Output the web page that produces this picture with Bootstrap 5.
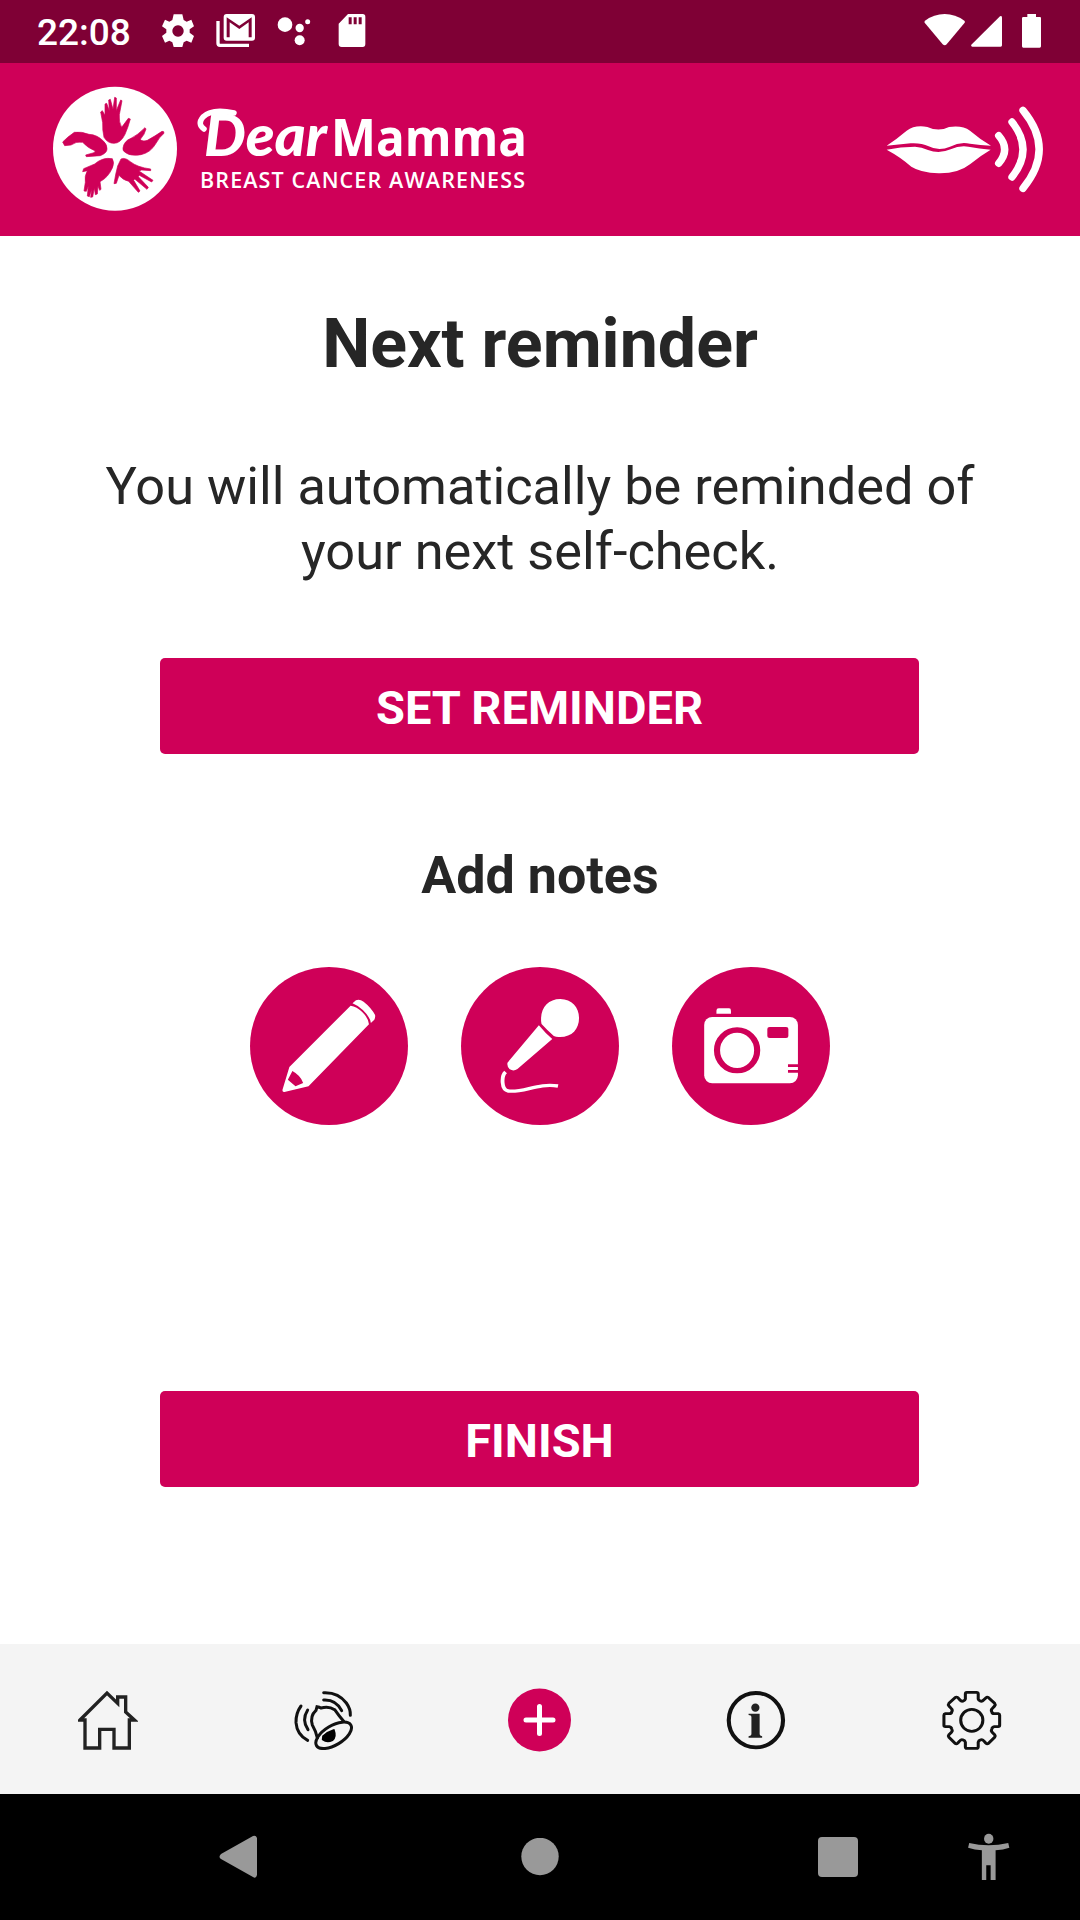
<!DOCTYPE html>
<html lang="en">
<head>
<meta charset="utf-8">
<meta name="viewport" content="width=device-width, initial-scale=1">
<title>Dear Mamma – Next reminder</title>
<link href="https://cdn.jsdelivr.net/npm/bootstrap@5.3.0/dist/css/bootstrap.min.css" rel="stylesheet">
<style>
  :root { --pink: #cf0058; --wine: #7f0035; --ink: #262626; }
  body { font-family: Roboto, "Liberation Sans", sans-serif; color: var(--ink); background: #fff; }
  svg { display: block; flex: none; }
  .screen { width: 1080px; height: 1920px; overflow: hidden; }
  .statusbar { height: 63px; background: var(--wine); color: #fff; padding: 0 38px 2px 37px; }
  .clock { font-size: 37px; font-weight: 500; line-height: 1; width: 123px; padding-top: 4px; }
  .ic-mail { margin-left: 19px; }
  .ic-dots { margin-left: 20px; }
  .ic-card { margin-left: 24px; }
  .ic-signal { margin-left: 4px; }
  .ic-battery { margin-left: 18px; }
  .appbar { height: 173px; background: var(--pink); padding: 0 36px 2px 53px; }
  .wordmark { margin-left: 20px; overflow: visible; }
  .heading { font-size: 68.1px; line-height: 80px; margin: 68px 0 0; font-weight: 700; }
  .message { font-size: 52.3px; line-height: 65px; margin: 70px 0 0; }
  .btn-pink { width: 759px; height: 96px; margin-right: 1px; background: var(--pink); color: #fff; border: 0; border-radius: 5px;
              font-size: 47px; font-weight: 700; line-height: 1; padding: 3px 0 0; }
  .btn-pink:hover { background: var(--wine); color: #fff; }
  .btn-set { margin-top: 74px; }
  .subheading { font-size: 52px; line-height: 62px; font-weight: 700; margin: 91px 0 0; }
  .notes { gap: 53px; margin-top: 60px; }
  .note { width: 158px; height: 158px; background: var(--pink); border: 0; }
  .btn-finish { margin-top: 266px; }
  .tabs { height: 150px; background: #f4f4f4; padding-top: 2px; }
  .sysnav { height: 126px; background: #000; padding-left: 217px; }
  .sysnav svg { fill: #999; }
  .nav-home { margin-left: 262px; }
  .nav-recent { margin-left: 259px; }
  .nav-access { margin-left: 109px; }
</style>
</head>
<body>
<div class="screen d-flex flex-column">

  <div class="statusbar d-flex align-items-center">
    <span class="clock">22:08</span>
    <svg width="36" height="36" viewBox="480 42 108 108" fill="#fff" fill-rule="evenodd"><path d="M521 46h26l4 17 9 5 14-6 8 20-13 9v10l13 10-8 20-14-6-9 5-4 14h-26l-4-14-9-5-13 6-9-20 13-10v-10l-13-9 9-20 13 6 9-5zM534 79a17 17 0 1 0 .1 0z"/></svg>
    <svg class="ic-mail" width="41" height="36" viewBox="645 42 123 108"><path d="M654 66v67q0 6 6 6h87" fill="none" stroke="#fff" stroke-width="10"/><path fill="#fff" fill-rule="evenodd" d="M680 45h76q9 0 9 9v62q0 9-9 9h-76q-9 0-9-9V54q0-9 9-9zM680 55v60h9V70l29 20 28-20v45h9V55l-37 25z"/></svg>
    <svg class="ic-dots" width="36" height="36" viewBox="828 42 108 108" fill="#fff"><circle cx="855" cy="77" r="22"/><circle cx="899" cy="87" r="12.5"/><circle cx="923" cy="68" r="7.5"/><circle cx="899" cy="124" r="15"/></svg>
    <svg class="ic-card" width="32" height="36" viewBox="1008 42 96 108" fill="#fff" fill-rule="evenodd"><path d="M1044 45h44q8 0 8 8v82q0 9-8 9h-63q-9 0-9-9V74zM1046 55v21h9V55zM1061 55v21h9V55zM1076 55v21h9V55z"/></svg>
    <svg class="ms-auto" width="43" height="36" viewBox="129 39 129 108"><path fill="#fff" d="M135 62q27-20 59-20t59 20q3 3 1 6l-54 65q-6 6-12 0L134 68q-2-3 1-6z"/></svg>
    <svg class="ic-signal" width="33" height="36" viewBox="270 39 99 108"><path fill="#fff" d="M366 52v84q0 4-4 4h-85q-6-1-3-6l86-85q5-3 6 3z"/></svg>
    <svg class="ic-battery" width="21" height="36" viewBox="423 39 63 108"><path fill="#fff" d="M442 42h26v9h12q3 0 3 4v84q0 4-4 4h-49q-4 0-4-4V55q0-4 4-4h12z"/></svg>
  </div>

  <header class="appbar d-flex align-items-center">
    <svg width="125" height="125" viewBox="24 18 375 375">
      <circle cx="210" cy="206" r="186" fill="#fff"/>
      <g fill="#cf0058" stroke="#cf0058" stroke-width="2" stroke-linejoin="round">
        <path d="M177 172 Q172 150 173 128 L167 96 172 92 180 106 180 72 185 70 193 92 191 60 196 58 204 88 209 52 214 54 214 92 227 60 231 62 223 104 Q221 126 230 142 L250 115 256 117 Q249 143 240 163 Q227 190 207 190 Q188 190 177 172Z"/>
        <path d="M234 204 Q237 183 258 175 Q277 166 300 143 L303 147 Q299 164 286 178 Q292 186 307 181 Q329 169 351 154 Q358 153 357 160 Q343 171 333 190 Q317 218 288 224 Q256 229 242 218 Q232 213 234 204Z"/>
        <path d="M176 184 Q157 164 132 163 Q108 154 88 157 Q66 172 53 186 L59 197 78 195 Q94 183 113 187 Q128 204 151 213 L147 218 122 225 124 230 166 227 Q186 219 186 207 Q187 195 176 184Z"/>
        <path d="M202 236 Q173 231 149 252 L116 266 113 275 127 272 Q118 289 121 307 L117 333 124 334 130 318 127 348 133 350 140 328 137 352 143 351 148 324 151 344 157 342 159 318 164 331 168 328 165 305 Q189 293 202 264 Q209 248 202 236Z"/>
        <path d="M228 237 Q240 231 256 245 Q277 262 317 267 L317 272 290 270 282 273 324 301 320 306 283 286 280 290 310 322 306 328 269 297 266 301 285 333 280 337 251 304 Q233 300 222 286 L214 310 207 311 Q212 280 218 258Z"/>
      </g>
    </svg>
    <svg class="wordmark" width="330" height="125" viewBox="0 0 330 125" fill="#fff">
      <path d="M6 43Q-1 38 5 31Q14 22 36 27" fill="none" stroke="#fff" stroke-width="5.500" stroke-linecap="round"/>
      <text x="6" y="69.500" font-family="Lato, sans-serif" font-weight="900" font-style="italic" font-size="57" textLength="123" lengthAdjust="spacingAndGlyphs">Dear</text>
      <text x="133" y="70" font-family="'Open Sans', sans-serif" font-weight="700" font-size="52" textLength="196" lengthAdjust="spacingAndGlyphs">Mamma</text>
      <text x="2" y="102" font-family="'Open Sans', sans-serif" font-weight="600" font-size="21.500" textLength="325" lengthAdjust="spacing">BREAST CANCER AWARENESS</text>
    </svg>
    <svg class="ms-auto" width="158" height="88" viewBox="48 45 474 264">
      <path fill="#fff" d="M50 167 Q78 149 110 122Q135 104 172 111Q206 126 237 111Q277 105 300 122Q329 147 363 167 Q331 165 300 161Q270 154 240 170Q207 185 176 169Q153 158 122 160Q85 164 50 167ZM50 179Q92 170 135 170Q155 171 174 180Q207 193 242 178Q268 166 295 170Q328 176 362 179Q331 197 300 223Q265 251 206 250Q152 248 124 230Q91 201 50 179Z"/>
      <path fill="none" stroke="#fff" stroke-width="22" stroke-linecap="round" d="M386 137Q422 178 386 220M426 96Q492 178 426 261M459 61Q556 178 459 295"/>
    </svg>
  </header>

  <main class="flex-grow-1 d-flex flex-column align-items-center text-center">
    <h1 class="heading">Next reminder</h1>
    <p class="message">You will automatically be reminded of<br>your next self-check.</p>
    <button type="button" class="btn btn-pink btn-set">SET REMINDER</button>
    <h2 class="subheading">Add notes</h2>
    <div class="notes d-flex justify-content-center">
      <button type="button" class="note rounded-circle p-0" aria-label="Write a note">
        <svg width="158" height="158" viewBox="26.100 51 412.900 474" preserveAspectRatio="none" fill="#fff"><path d="M294 160L303 151Q312 146 323 155Q343 173 353 195Q354 203 351 209L342 219Q340 201 321 180Q307 166 294 160Z"/><path fill-rule="evenodd" d="M289 167Q305 169 320 187Q336 205 337 223L179 409L116 426Q110 427 111 419L129 351ZM137 363L125 389 145 409 165 399Q159 377 137 363Z"/></svg>
      </button>
      <button type="button" class="note rounded-circle p-0" aria-label="Record a note">
        <svg width="158" height="158" viewBox="577.500 51 412.900 474" preserveAspectRatio="none" fill="#fff"><path d="M787 215C784 176 804 147 837 147C867 147 886 172 886 204C886 237 868 261 836 261Q827 262 820 258Q804 242 788 222ZM781 226Q798 250 816 267L725 357Q715 365 705 358Q697 350 699 338Z"/><path d="M694 366C683 377 682 420 701 423C740 429 779 398 831 408" fill="none" stroke="#fff" stroke-width="10"/></svg>
      </button>
      <button type="button" class="note rounded-circle p-0" aria-label="Take a picture">
        <svg width="158" height="158" viewBox="1128.900 51 412.900 474" preserveAspectRatio="none"><path fill="#fff" d="M1245 191V182Q1245 175 1251 175H1278Q1283 175 1283 182V191Z"/><rect x="1213" y="201" width="245" height="199" rx="21" ry="24" fill="#fff"/><ellipse cx="1299" cy="301" rx="52.500" ry="61" fill="#fff" stroke="#cf0058" stroke-width="16"/><rect x="1378" y="231" width="55" height="33" rx="6" fill="#cf0058"/><path fill="#cf0058" d="M1432 343h30v8h-30zM1432 360h30v8h-30z"/></svg>
      </button>
    </div>
    <button type="button" class="btn btn-pink btn-finish">FINISH</button>
  </main>

  <nav class="tabs row g-0 align-items-center" aria-label="Main">
    <div class="col d-flex justify-content-center">
      <svg width="60" height="60" viewBox="54 180 180 180"><path d="M60 270L141 189 173 220V201H197V246L223 270H208V354H162V298H119V354H75V270Z" fill="none" stroke="#222" stroke-width="10"/></svg>
    </div>
    <div class="col d-flex justify-content-center">
      <svg width="60" height="60" viewBox="702 180 180 180" fill="none" stroke="#111" stroke-width="9" stroke-linecap="round"><path d="M772 324Q767 302 757 285Q749 258 768 241L771 230Q778 231 783 234Q806 227 824 239Q838 259 851 274"/><ellipse cx="821" cy="316" rx="60" ry="29" transform="rotate(-31 821 316)"/><path d="M790 319Q804 306 821 301Q828 319 817 330Q801 338 789 328Z" fill="#000" stroke="#000" stroke-width="7"/><path d="M791 188Q835 186 859 219Q872 237 871 256M791 210Q828 208 845 242M723 228Q707 250 708 278Q711 315 743 331M743 240Q724 270 744 299"/></svg>
    </div>
    <div class="col d-flex justify-content-center">
      <svg width="64" height="64" viewBox="0 0 64 64"><circle cx="31.500" cy="32" r="31.500" fill="#cf0058"/><path d="M18 32H45M31.500 18.500V45.500" stroke="#fff" stroke-width="5" stroke-linecap="round"/></svg>
    </div>
    <div class="col d-flex justify-content-center">
      <svg width="60" height="60" viewBox="688.800 180 168 180" preserveAspectRatio="none"><ellipse cx="772.500" cy="270.500" rx="76" ry="81.500" fill="none" stroke="#111" stroke-width="11.500"/><ellipse cx="771" cy="233" rx="11.500" ry="12.500" fill="#222"/><path fill="#222" d="M752 251H783V313Q783 318 790 319V323H752V319Q760 318 760 313V260Q760 256 752 255Z"/></svg>
    </div>
    <div class="col d-flex justify-content-center">
      <svg width="60" height="60" viewBox="1293.600 180 168 180" preserveAspectRatio="none" fill="none" stroke="#111" stroke-width="8.500" stroke-linejoin="round"><ellipse cx="1377" cy="271" rx="31" ry="33"/><path d="M1359 192Q1359 187 1363 187H1390Q1395 187 1395 192V207Q1396 212 1401 213Q1406 215 1410 210L1417 203Q1420 200 1424 203L1441 220Q1444 224 1441 228L1434 236Q1430 240 1433 245Q1434 251 1440 251H1451Q1455 252 1455 256V286Q1455 290 1451 290H1440Q1434 291 1433 297Q1430 302 1434 307L1441 314Q1444 318 1441 322L1424 340Q1420 343 1416 339L1410 332Q1406 327 1401 330Q1396 331 1395 337V350Q1395 355 1390 355H1363Q1359 355 1359 350V337Q1358 331 1353 330Q1348 327 1344 332L1338 339Q1334 343 1330 340L1313 322Q1310 318 1313 314L1320 307Q1324 302 1321 297Q1320 291 1314 290H1303Q1299 290 1299 286V256Q1299 252 1303 251H1314Q1320 251 1321 245Q1324 240 1320 236L1313 228Q1310 224 1313 220L1330 203Q1334 200 1338 203L1344 210Q1348 215 1353 213Q1358 212 1359 207Z"/></svg>
    </div>
  </nav>

  <div class="sysnav d-flex align-items-center">
    <svg width="42" height="44" viewBox="0 0 42 44"><path d="M40 3V40Q39 44 36 42L4 24Q1 22 4 19L36 1Q39 0 40 3Z"/></svg>
    <svg class="nav-home" width="38" height="38" viewBox="0 0 38 38"><circle cx="19" cy="18.500" r="18.700"/></svg>
    <svg class="nav-recent" width="40" height="40" viewBox="0 0 40 40"><rect width="40" height="40" rx="4"/></svg>
    <svg class="nav-access" width="44" height="48" viewBox="1398 101 80 144" preserveAspectRatio="none"><ellipse cx="1437.500" cy="118" rx="8.500" ry="15"/><path d="M1402 131Q1437 145 1473 131L1475 145Q1464 151 1450 153V242H1441V198H1433V242H1425V153Q1412 151 1400 145Z"/></svg>
  </div>
</div>
<script src="https://cdn.jsdelivr.net/npm/bootstrap@5.3.0/dist/js/bootstrap.bundle.min.js"></script>
</body>
</html>
